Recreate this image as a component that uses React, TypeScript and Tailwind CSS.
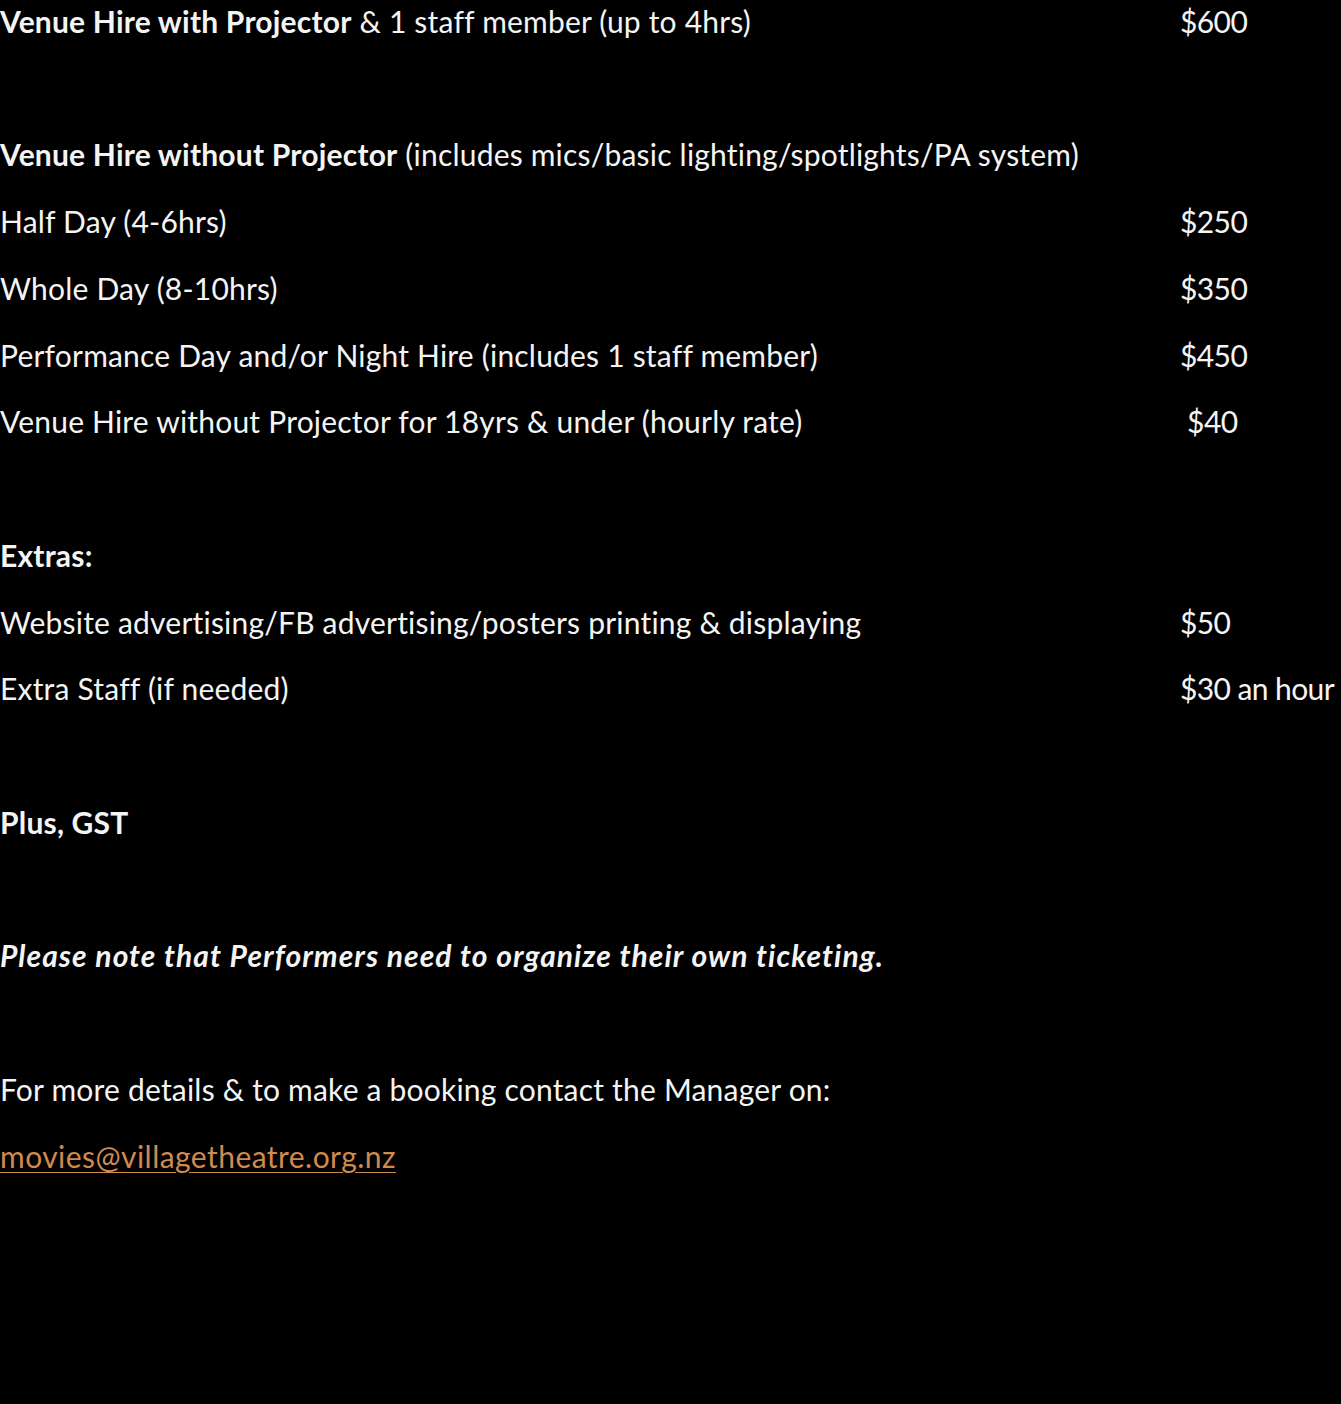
import React from 'react';

type Row = { label: React.ReactNode; price?: string };

function PriceRow({ label, price }: Row) {
  return (
    <div className="flex h-[66.75px] items-center whitespace-nowrap">
      <div className="w-[1180px] shrink-0">{label}</div>
      <div className="shrink-0 tracking-[-0.6px]">{price}</div>
    </div>
  );
}

const Gap = () => <div className="h-[66.75px]" />;

export default function App() {
  return (
    <div
      className="min-h-[1404px] w-full overflow-hidden bg-black text-[30px] tracking-[0.2px] text-[#f4f4f4]"
      style={{ fontFamily: 'Lato, "Open Sans", sans-serif' }}
    >
      <div className="-mt-[12px]">
        <PriceRow
          label={
            <>
              <span className="font-bold">Venue Hire with Projector</span> &amp; 1 staff member (up to 4hrs)
            </>
          }
          price="$600"
        />
        <Gap />
        <PriceRow
          label={
            <>
              <span className="font-bold">Venue Hire without Projector</span> (includes mics/basic lighting/spotlights/PA system)
            </>
          }
        />
        <PriceRow label="Half Day (4-6hrs)" price="$250" />
        <PriceRow label="Whole Day (8-10hrs)" price="$350" />
        <PriceRow label="Performance Day and/or Night Hire (includes 1 staff member)" price="$450" />
        <PriceRow label="Venue Hire without Projector for 18yrs & under (hourly rate)" price={'\u00a0$40'} />
        <Gap />
        <PriceRow label={<span className="font-bold">Extras:</span>} />
        <PriceRow label="Website advertising/FB advertising/posters printing & displaying" price="$50" />
        <PriceRow label="Extra Staff (if needed)" price="$30 an hour" />
        <Gap />
        <PriceRow label={<span className="font-bold">Plus, GST</span>} />
        <Gap />
        <PriceRow
          label={
            <span className="font-bold italic tracking-[1.05px]">
              Please note that Performers need to organize their own ticketing.
            </span>
          }
        />
        <Gap />
        <PriceRow label="For more details & to make a booking contact the Manager on:" />
        <PriceRow
          label={
            <a
              href="#"
              className="text-[#cf8b4e] tracking-[0.45px] underline decoration-1 underline-offset-4"
            >
              movies@villagetheatre.org.nz
            </a>
          }
        />
      </div>
    </div>
  );
}
